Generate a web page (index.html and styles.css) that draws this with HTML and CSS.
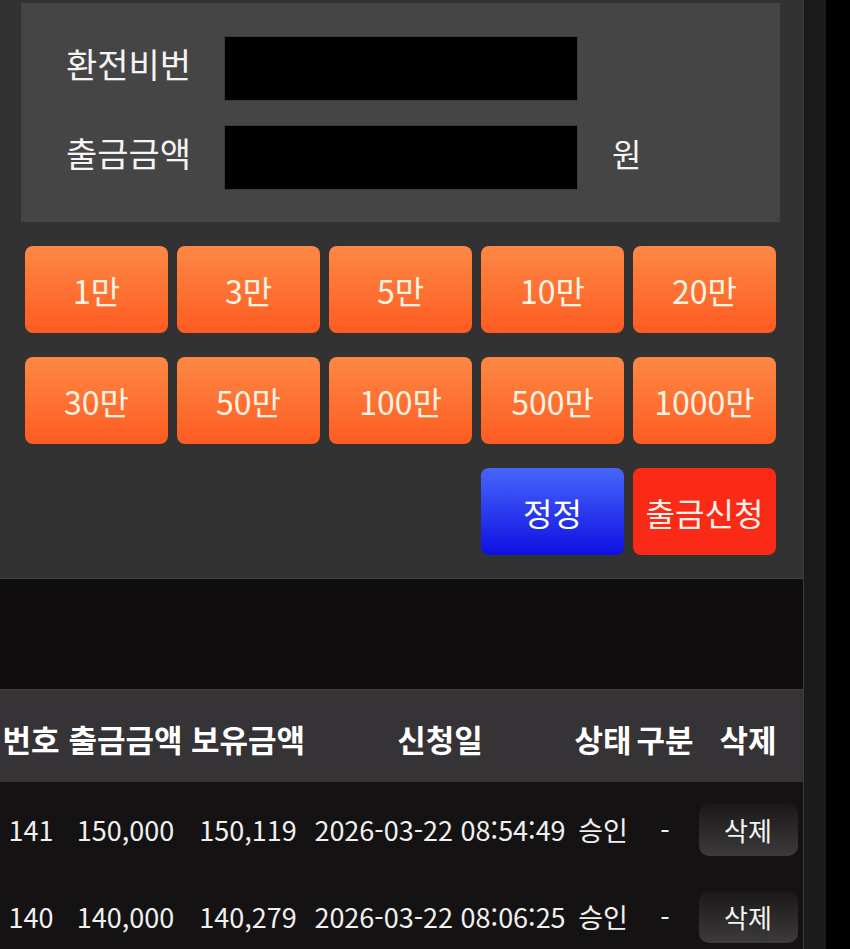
FILE: index.html
```html
<!DOCTYPE html>
<html lang="ko">
<head>
    <meta charset="UTF-8">
    <meta name="viewport" content="width=device-width, initial-scale=1.0">
    <title>출금신청</title>
    <link rel="stylesheet" href="styles.css">
</head>
<body>

    <div class="screen">
        <div class="main">
            <!-- 출금 신청 폼 -->
            <section class="withdraw">
                <div class="form-box">
                    <div class="form-row">
                        <label for="pin">환전비번</label>
                        <input type="password" id="pin" class="field">
                    </div>
                    <div class="form-row">
                        <label for="amount">출금금액</label>
                        <input type="text" id="amount" class="field">
                        <span class="unit">원</span>
                    </div>
                </div>

                <div class="amount-grid">
                    <button class="btn-amount">1만</button>
                    <button class="btn-amount">3만</button>
                    <button class="btn-amount">5만</button>
                    <button class="btn-amount">10만</button>
                    <button class="btn-amount">20만</button>
                    <button class="btn-amount">30만</button>
                    <button class="btn-amount">50만</button>
                    <button class="btn-amount">100만</button>
                    <button class="btn-amount">500만</button>
                    <button class="btn-amount">1000만</button>
                    <button class="btn-reset">정정</button>
                    <button class="btn-submit">출금신청</button>
                </div>
            </section>

            <div class="band"></div>

            <!-- 출금 내역 -->
            <table class="history">
                <colgroup>
                    <col class="c-no">
                    <col class="c-out">
                    <col class="c-hold">
                    <col class="c-date">
                    <col class="c-state">
                    <col class="c-type">
                    <col class="c-del">
                </colgroup>
                <thead>
                    <tr>
                        <th>번호</th>
                        <th>출금금액</th>
                        <th>보유금액</th>
                        <th>신청일</th>
                        <th>상태</th>
                        <th>구분</th>
                        <th>삭제</th>
                    </tr>
                </thead>
                <tbody>
                    <tr>
                        <td>141</td>
                        <td>150,000</td>
                        <td>150,119</td>
                        <td>2026-03-22 08:54:49</td>
                        <td>승인</td>
                        <td>-</td>
                        <td><button class="btn-del">삭제</button></td>
                    </tr>
                    <tr>
                        <td>140</td>
                        <td>140,000</td>
                        <td>140,279</td>
                        <td>2026-03-22 08:06:25</td>
                        <td>승인</td>
                        <td>-</td>
                        <td><button class="btn-del">삭제</button></td>
                    </tr>
                </tbody>
            </table>
        </div>
        <div class="side-strip"></div>
    </div>

</body>
</html>
```

FILE: styles.css
```css
* {
    margin: 0;
    padding: 0;
    box-sizing: border-box;
}

body {
    font-family: "Noto Sans CJK KR", "Noto Sans", sans-serif;
    background-color: #000;
    color: #f2f2f2;
    overflow: hidden;
}

.screen {
    display: flex;
    height: 949px;
    overflow: hidden;
}

.main {
    width: 804px;
    flex-shrink: 0;
    border-right: 1px solid #3c3b3c;
    background-color: #0f0d0e;
}

.side-strip {
    width: 22px;
    background-color: #1b1b1b;
}

/* 폼 영역 */
.withdraw {
    background-color: #323232;
    padding: 3px 27px 23px 0;
    border-bottom: 1px solid #444;
}

.form-box {
    background-color: #454545;
    margin: 0 0 0 21px;
    width: 759px;
    padding: 33px 0 32px 45px;
    display: flex;
    flex-direction: column;
    gap: 24px;
}

.form-row {
    display: flex;
    align-items: center;
}

.form-row label {
    width: 158px;
    font-size: 34px;
    color: #f4f4f4;
    line-height: 1;
    padding-bottom: 10px;
    white-space: nowrap;
}

.field {
    width: 354px;
    height: 65px;
    background-color: #000;
    border: 1px solid #3a3a3a;
    outline: none;
    color: #fff;
    font-size: 26px;
    padding: 0 12px;
}

.unit {
    margin-left: 34px;
    font-size: 32px;
    color: #f4f4f4;
    line-height: 1;
    padding-bottom: 10px;
}

/* 금액 버튼 */
.amount-grid {
    display: grid;
    grid-template-columns: repeat(5, 143px);
    grid-auto-rows: 87px;
    column-gap: 9px;
    row-gap: 24px;
    margin: 24px 0 0 25px;
}

.amount-grid button {
    border: none;
    border-radius: 8px;
    font-family: "Noto Sans CJK KR", "Noto Sans", sans-serif;
    font-size: 32px;
    cursor: pointer;
    white-space: nowrap;
    padding: 0;
}

.btn-amount {
    background: linear-gradient(to bottom, #fd8944, #fe5b22);
    color: #fff3e4;
}

.btn-reset {
    grid-column: 4;
    background: linear-gradient(to bottom, #4666fb, #1010e2);
    color: #fff;
}

.btn-submit {
    background-color: #fb2a16;
    color: #fff0ea;
}

.band {
    height: 111px;
    border-bottom: 1px solid #414041;
}

/* 내역 테이블 */
.history {
    width: 803px;
    table-layout: fixed;
    border-collapse: collapse;
}

.c-no { width: 62px; }
.c-out { width: 127px; }
.c-hold { width: 118px; }
.c-date { width: 266px; }
.c-state { width: 60px; }
.c-type { width: 64px; }
.c-del { width: 106px; }

.history th {
    height: 92px;
    background-color: #353335;
    font-size: 31px;
    font-weight: 700;
    color: #fff;
    white-space: nowrap;
    text-align: center;
    padding: 4px 0 0;
}

.history th:last-child {
    padding-right: 4px;
}

.history td {
    height: 87px;
    background-color: #141213;
    font-size: 27px;
    color: #f0f0f0;
    text-align: center;
    white-space: nowrap;
    padding: 8px 0 0;
}

.history td:last-child {
    padding-right: 4px;
}

.btn-del {
    width: 99px;
    height: 52px;
    border: none;
    border-radius: 10px;
    background: linear-gradient(to bottom, #1a1818, #3c3a3b);
    color: #f4f4f4;
    font-family: "Noto Sans CJK KR", "Noto Sans", sans-serif;
    font-size: 26px;
    cursor: pointer;
}
```
